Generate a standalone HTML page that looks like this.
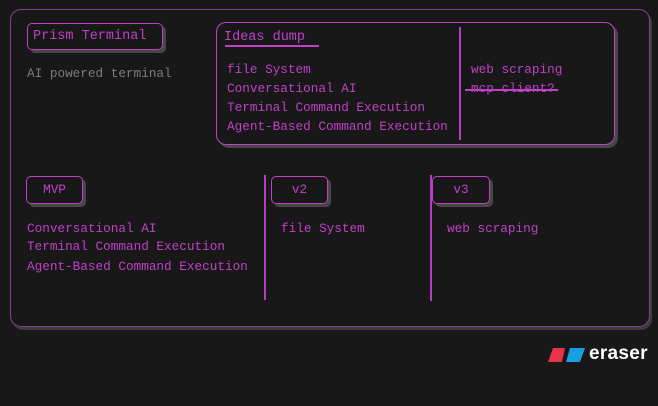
<!DOCTYPE html>
<html><head><meta charset="utf-8"><style>
body{margin:0;width:658px;height:406px;background:#181818;overflow:hidden;position:relative;font-family:"Liberation Mono",monospace;}
.a{position:absolute;}
.t{position:absolute;font-size:12.7px;line-height:14px;color:#c040c8;white-space:pre;}
.box{position:absolute;border:1.6px solid #c040c8;border-radius:5px;box-shadow:3px 3px 0 #474747;box-sizing:border-box;}
.vl{position:absolute;width:1.6px;background:#b83cc0;}
</style></head><body>
<div class="a" style="left:10px;top:9px;width:640px;height:318px;border:1.5px solid #8e3a9c;border-radius:11px;box-shadow:2px 3px 0 #3c3c3c;box-sizing:border-box"></div>
<div class="box" style="left:27px;top:23px;width:136px;height:27px"></div>
<div class="t" style="left:33px;top:30px;font-size:13.5px">Prism Terminal</div>
<div class="t" style="left:27px;top:67px;color:#7c7c7c">AI powered terminal</div>
<div class="box" style="left:216px;top:22px;width:399px;height:123px;border-radius:10px"></div>
<div class="vl" style="left:459px;top:27px;height:113px"></div>
<div class="t" style="left:224px;top:31px;font-size:13.5px">Ideas dump</div>
<div class="a" style="left:225px;top:45px;width:94px;height:2px;background:#c040c8"></div>
<div class="t" style="left:227px;top:63px">file System</div>
<div class="t" style="left:227px;top:82px">Conversational AI</div>
<div class="t" style="left:227px;top:101px">Terminal Command Execution</div>
<div class="t" style="left:227px;top:120px">Agent-Based Command Execution</div>
<div class="t" style="left:471px;top:63px">web scraping</div>
<div class="t" style="left:471px;top:82px">mcp client?</div>
<div class="a" style="left:465px;top:89px;width:93px;height:1.5px;background:#c040c8"></div>
<div class="box" style="left:26px;top:176px;width:57px;height:28px"></div>
<div class="t" style="left:26px;top:183px;width:57px;text-align:center">MVP</div>
<div class="box" style="left:271px;top:176px;width:57px;height:28px"></div>
<div class="t" style="left:271px;top:183px;width:57px;text-align:center">v2</div>
<div class="box" style="left:432px;top:176px;width:58px;height:28px"></div>
<div class="t" style="left:432px;top:183px;width:58px;text-align:center">v3</div>
<div class="vl" style="left:264px;top:175px;height:125px"></div>
<div class="vl" style="left:430px;top:175px;height:126px"></div>
<div class="t" style="left:27px;top:222px">Conversational AI</div>
<div class="t" style="left:27px;top:240px">Terminal Command Execution</div>
<div class="t" style="left:27px;top:260px">Agent-Based Command Execution</div>
<div class="t" style="left:281px;top:222px">file System</div>
<div class="t" style="left:447px;top:222px">web scraping</div>
<svg class="a" style="left:548px;top:348px" width="38" height="15"><polygon points="5,0 17,0 14,14 0,14" fill="#e8334a"/><polygon points="22,0 37,0 32,14 18,14" fill="#1a9ee0"/></svg>
<div class="a" style="left:589px;top:343px;font:bold 19px 'Liberation Sans',sans-serif;color:#fff;letter-spacing:0.3px">eraser</div>
</body></html>
